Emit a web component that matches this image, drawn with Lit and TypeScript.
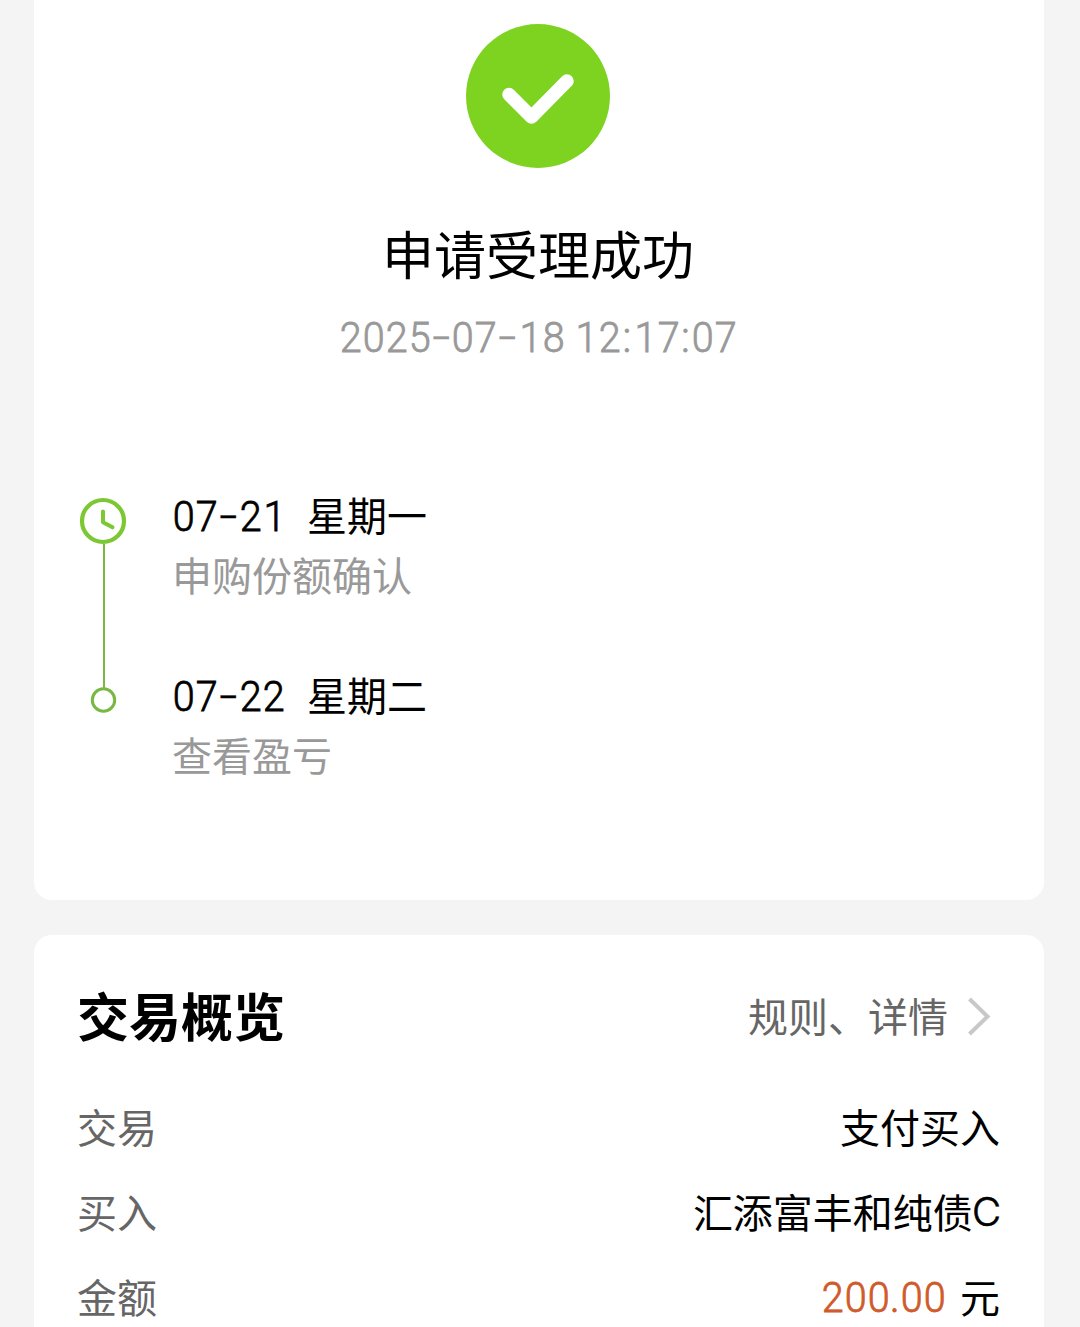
import { LitElement, html, css, svg } from "lit";
import { customElement, property } from "lit/decorators.js";

/** Renders a numeric string with separate spacing for digits, dashes, colons and dots. */
@customElement("num-text")
class NumText extends LitElement {
  @property() value = "";
  static styles = css`
    :host {
      display: inline-block;
      white-space: pre;
      font-family: Roboto, "Liberation Sans", sans-serif;
      font-weight: 300;
      -webkit-text-stroke: 0.8px currentColor;
    }
    span { display: inline-block; text-align: center; white-space: pre; }
    .digit { width: 0.548em; transform: scaleX(0.94); }
    .one { width: 0.575em; text-align: left; transform: translateX(1px) scaleX(0.95); }
    .dash { width: 0.49em; font-family: Inter, sans-serif; transform: scaleX(1.18) translateY(-1px); -webkit-text-stroke-width: 0.4px; }
    .colon { width: 0.275em; }
    .dot { width: 0.245em; }
    .gap { width: 0.21em; }
  `;
  private kind(c: string) {
    if (c === "1") return "one";
    if (c === "-") return "dash";
    if (c === ":") return "colon";
    if (c === ".") return "dot";
    if (c === " ") return "gap";
    return "digit";
  }
  render() {
    return html`${[...this.value].map((c) => html`<span class=${this.kind(c)}>${c}</span>`)}`;
  }
}

@customElement("app-root")
class AppRoot extends LitElement {
  static styles = css`
    :host {
      display: block;
      box-sizing: border-box;
      height: 1327px;
      overflow: hidden;
      background: #f4f4f4;
      padding: 0 36px 0 34px;
      font-family: "Noto Sans CJK SC", sans-serif;
      font-size: 40px;
      line-height: 60px;
      color: #000;
    }
    .card { background: #fff; box-sizing: border-box; }
    .result { height: 900px; border-radius: 0 0 18px 18px; padding: 22px 46px 0; }
    .hero { display: flex; flex-direction: column; align-items: center; margin-right: 2px; }
    .badge { display: block; width: 148px; height: 148px; }
    .title { margin-top: 47px; font-size: 52px; line-height: 72px; }
    .time { margin-top: 18px; font-size: 42px; line-height: 60px; color: #999; }
    .steps { margin-top: 116px; }
    .step { display: flex; height: 180px; }
    .rail { width: 47px; flex: none; display: flex; flex-direction: column; align-items: center; padding-top: 11px; }
    .clock { display: block; width: 50px; height: 50px; flex: none; margin: 0 0 0 -2px; }
    .line { width: 2px; height: 147px; background: #79b843; margin: -1px 0 0 1px; flex: none; }
    .dot { display: block; width: 28px; height: 28px; margin: 10px 0 0 0; }
    .text { padding-left: 45px; }
    .date { display: flex; }
    .date num-text { width: 135px; font-size: 42px; margin-top: 2px; height: 58px; }
    .note { color: #999; }
    .overview { margin-top: 35px; height: 500px; border-radius: 18px; padding: 37px 44px 0 43px; }
    .head { display: flex; justify-content: space-between; align-items: center; height: 86px; margin-bottom: 25px; }
    h2 { margin: 0; font-size: 52px; font-weight: 700; line-height: 80px; }
    .link { display: flex; align-items: center; color: #666; padding-right: 9px; }
    .chevron { display: block; width: 26px; height: 40px; margin: 2px 0 0 17px; }
    .row { display: flex; justify-content: space-between; align-items: center; height: 85px; }
    .label { color: #666; }
    .value { display: flex; }
    .latin { font-family: Inter, sans-serif; font-weight: 300; -webkit-text-stroke: 0.6px currentColor; margin: 1px -1px 0 -1px; height: 59px; }
    .amount { color: #cf5a2b; font-size: 42px; margin: 2px 14px 0 0; height: 58px; }
  `;

  private steps = [
    { date: "07-21", day: "星期一", note: "申购份额确认" },
    { date: "07-22", day: "星期二", note: "查看盈亏" },
  ];

  private clock = svg`<svg class="clock" viewBox="0 0 50 50" fill="none" stroke="#7bc832" stroke-linecap="round" stroke-linejoin="round">
    <circle cx="25" cy="26" r="21" stroke-width="4.200"/><path d="M25 16.500V27.200L34.500 32.300" stroke-width="4"/></svg>`;
  private ring = svg`<svg class="dot" viewBox="0 0 28 28"><circle cx="13.500" cy="15" r="11.200" fill="#fff" stroke="#79b843" stroke-width="3"/></svg>`;

  render() {
    return html`
      <section class="card result">
        <div class="hero">
          <svg class="badge" viewBox="0 0 148 148">
            <circle cx="74" cy="74" r="72" fill="#7ed321" />
            <path d="M45 72.500L67.500 95L103 59" fill="none" stroke="#fff" stroke-width="13.500" stroke-linecap="round" stroke-linejoin="round" />
          </svg>
          <div class="title">申请受理成功</div>
          <num-text class="time" value="2025-07-18 12:17:07"></num-text>
        </div>
        <div class="steps">
          ${this.steps.map((s, i) => html`
            <div class="step">
              <div class="rail">
                ${i === 0 ? html`${this.clock}<div class="line"></div>` : this.ring}
              </div>
              <div class="text">
                <div class="date"><num-text value=${s.date}></num-text><span>${s.day}</span></div>
                <div class="note">${s.note}</div>
              </div>
            </div>`)}
        </div>
      </section>
      <section class="card overview">
        <div class="head">
          <h2>交易概览</h2>
          <div class="link">
            <span>规则、详情</span>
            <svg class="chevron" viewBox="0 0 26 40"><path d="M4.500 3L22.500 20.500L4.500 38" fill="none" stroke="#c8c8c8" stroke-width="4" /></svg>
          </div>
        </div>
        <div class="row"><span class="label">交易</span><span class="value">支付买入</span></div>
        <div class="row"><span class="label">买入</span><span class="value">汇添富丰和纯债<span class="latin">C</span></span></div>
        <div class="row"><span class="label">金额</span><span class="value"><num-text class="amount" value="200.00"></num-text>元</span></div>
      </section>
    `;
  }
}
